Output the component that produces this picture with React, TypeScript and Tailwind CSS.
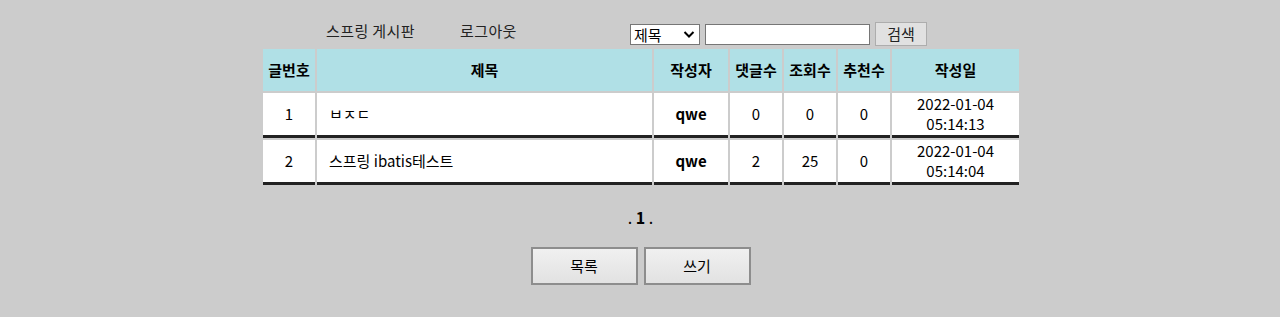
import React from 'react';

interface Post {
  no: number;
  title: string;
  writer: string;
  comments: number;
  views: number;
  likes: number;
  date: string;
  time: string;
}

const POSTS: Post[] = [
  { no: 1, title: 'ㅂㅈㄷ', writer: 'qwe', comments: 0, views: 0, likes: 0, date: '2022-01-04', time: '05:14:13' },
  { no: 2, title: '스프링 ibatis테스트', writer: 'qwe', comments: 2, views: 25, likes: 0, date: '2022-01-04', time: '05:14:04' },
];

const HEADERS = [
  { label: '글번호', w: 'w-[52px]' },
  { label: '제목', w: 'w-[335px]' },
  { label: '작성자', w: 'w-[74px]' },
  { label: '댓글수', w: 'w-[52px]' },
  { label: '조회수', w: 'w-[52px]' },
  { label: '추천수', w: 'w-[52px]' },
  { label: '작성일', w: 'w-[127px]' },
];

const font = { fontFamily: '"Noto Sans CJK KR", "Noto Sans", sans-serif' };

export default function App() {
  const cell = 'bg-white border-b-[3px] border-[#222] text-center align-middle';

  return (
    <div className="min-h-[317px] w-full bg-[#cccccc] text-black text-[15px]" style={font}>
      <div className="w-[760px] mx-auto pl-[1px]">
        {/* Top bar */}
        <div className="flex h-[47px]">
          <span className="ml-[65px] w-[134px] mt-[21px] h-[20px] leading-[20px] text-[#222] tracking-[0.4px]">스프링 게시판</span>
          <span className="w-[170px] mt-[21px] h-[20px] leading-[20px] text-[#222] tracking-[0.4px]">로그아웃</span>
          <div className="mt-[24px] relative w-[70px] h-[21px]">
            <select
              className="appearance-none w-full h-full bg-white border border-[#767676] pl-[3px] text-[15px] leading-[19px] outline-none"
              defaultValue="title"
            >
              <option value="title">제목</option>
              <option value="content">내용</option>
              <option value="writer">작성자</option>
            </select>
            <svg className="absolute right-[5px] top-[6px] pointer-events-none" width="12" height="9" viewBox="0 0 12 9">
              <path d="M1.5 2 L6 6.5 L10.5 2" fill="none" stroke="#000" strokeWidth="2" />
            </svg>
          </div>
          <input
            type="text"
            className="ml-[5px] mt-[24px] w-[165px] h-[21px] bg-white border border-[#767676] outline-none"
          />
          <button className="ml-[5px] mt-[22px] w-[52px] h-[24px] bg-[#e1e1e1] border border-[#adadad] text-[15px] leading-[20px] text-[#222]">
            검색
          </button>
        </div>

        {/* Board table */}
        <table className="table-fixed border-separate border-spacing-[2px] w-[760px]">
          <thead>
            <tr>
              {HEADERS.map((h) => (
                <th key={h.label} className={`${h.w} h-[42px] bg-[#b0e0e6] font-bold text-[15px] text-center p-0`}>
                  {h.label}
                </th>
              ))}
            </tr>
          </thead>
          <tbody>
            {POSTS.map((p) => (
              <tr key={p.no}>
                <td className={`${cell} h-[45px] p-0`}>{p.no}</td>
                <td className={`${cell} text-left pl-[12px] pr-0 py-0`}>{p.title}</td>
                <td className={`${cell} font-bold p-0`}>{p.writer}</td>
                <td className={`${cell} p-0`}>{p.comments}</td>
                <td className={`${cell} p-0`}>{p.views}</td>
                <td className={`${cell} p-0`}>{p.likes}</td>
                <td className={`${cell} p-0 leading-[20px]`}>
                  {p.date}
                  <br />
                  {p.time}
                </td>
              </tr>
            ))}
          </tbody>
        </table>

        {/* Paging */}
        <div className="mt-[20px] text-center leading-[20px] text-[16px]">
          . <b>1</b> .
        </div>

        {/* Buttons */}
        <div className="mt-[20px] flex justify-center gap-[6px]">
          <button className="w-[107px] h-[38px] bg-gradient-to-b from-[#f0f0f0] to-[#e2e2e2] border-2 border-[#8d8d8d] text-[15px]">
            목록
          </button>
          <button className="w-[107px] h-[38px] bg-gradient-to-b from-[#f0f0f0] to-[#e2e2e2] border-2 border-[#8d8d8d] text-[15px]">
            쓰기
          </button>
        </div>
      </div>
    </div>
  );
}
